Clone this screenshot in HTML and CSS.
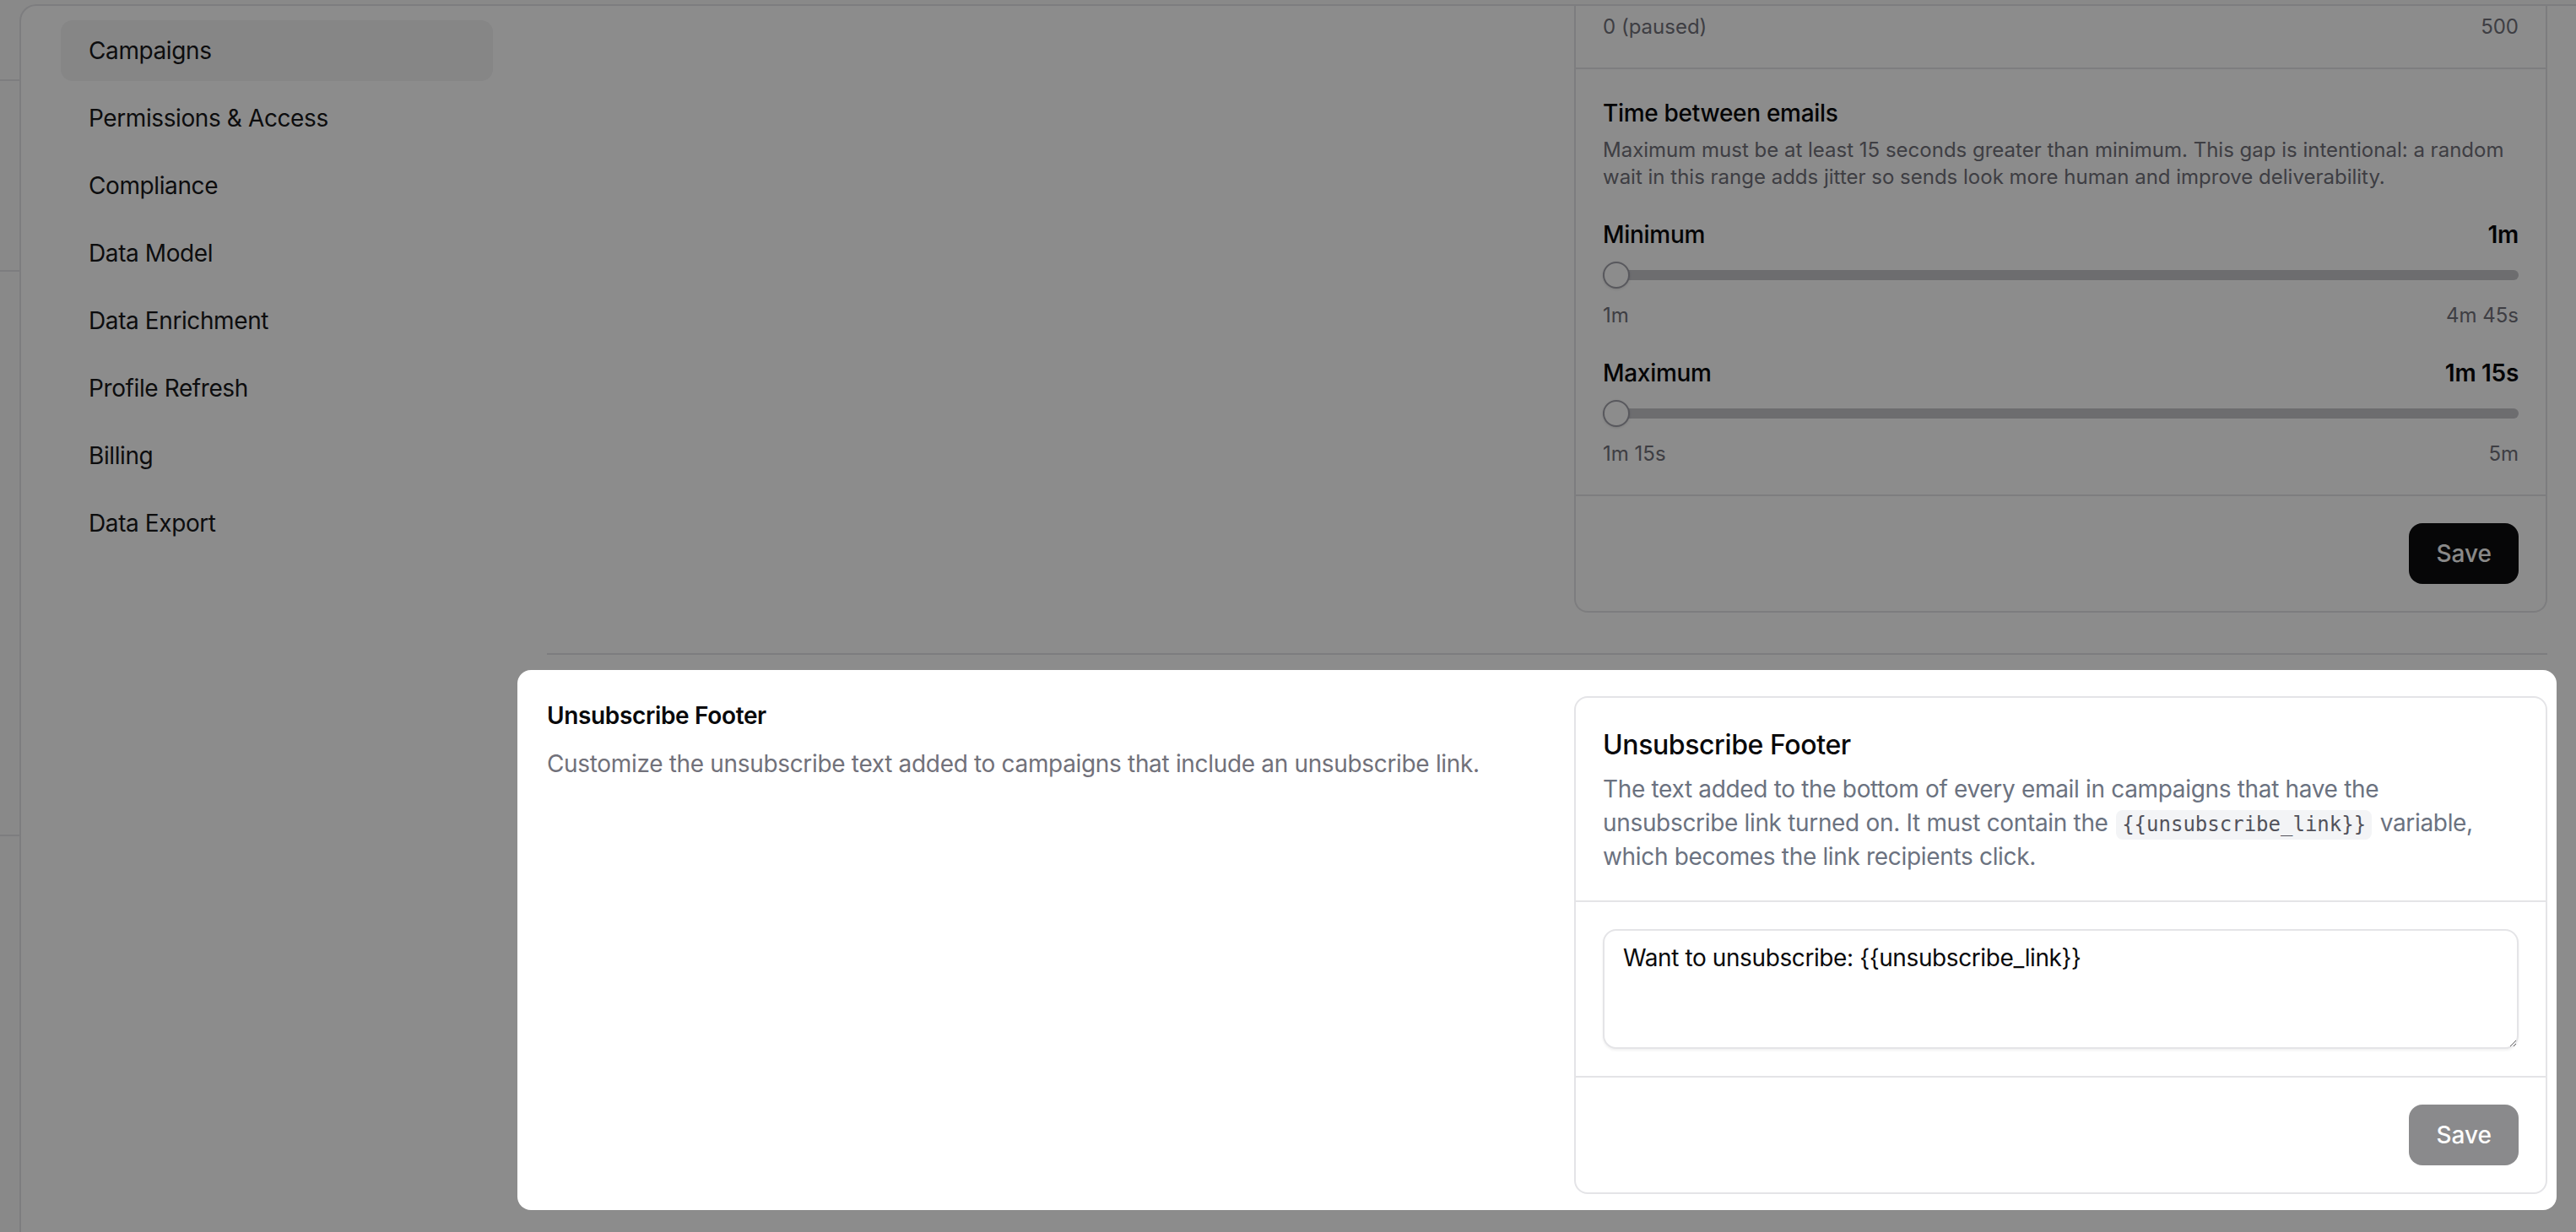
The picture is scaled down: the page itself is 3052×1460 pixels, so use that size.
FILE: index.html
```html
<!DOCTYPE html>
<html lang="en">
<head>
<meta charset="utf-8">
<title>Settings – Campaigns</title>
<link rel="stylesheet" href="styles.css">
</head>
<body>
<div class="app">
  <aside class="rail">
    <div class="rail-seg s1"></div>
    <div class="rail-seg s2"></div>
    <div class="rail-seg s3"></div>
  </aside>
  <main class="panel">
    <nav class="settings-nav">
      <a class="nav-item active">Campaigns</a>
      <a class="nav-item">Permissions &amp; Access</a>
      <a class="nav-item">Compliance</a>
      <a class="nav-item">Data Model</a>
      <a class="nav-item">Data Enrichment</a>
      <a class="nav-item">Profile Refresh</a>
      <a class="nav-item">Billing</a>
      <a class="nav-item">Data Export</a>
    </nav>
    <div class="content">
      <section class="setting-row first">
        <div class="row-info"></div>
        <div class="card card-clipped">
          <div class="card-section top-labels">
            <div class="range-labels"><span>0 (paused)</span><span>500</span></div>
          </div>
          <div class="card-section">
            <div class="field-title">Time between emails</div>
            <p class="field-desc">Maximum must be at least 15 seconds greater than minimum. This gap is intentional: a random wait in this range adds jitter so sends look more human and improve deliverability.</p>
            <div class="slider-group">
              <div class="slider-head"><span>Minimum</span><span class="val">1m</span></div>
              <div class="slider"><div class="track"></div><div class="thumb"></div></div>
              <div class="range-labels small-gap"><span>1m</span><span>4m 45s</span></div>
            </div>
            <div class="slider-group">
              <div class="slider-head"><span>Maximum</span><span class="val">1m 15s</span></div>
              <div class="slider"><div class="track"></div><div class="thumb"></div></div>
              <div class="range-labels small-gap"><span>1m 15s</span><span>5m</span></div>
            </div>
          </div>
          <div class="card-footer"><button class="btn btn-dark">Save</button></div>
        </div>
      </section>

      <section class="setting-row spotlight">
        <div class="row-info">
          <h3 class="row-title">Unsubscribe Footer</h3>
          <p class="row-desc">Customize the unsubscribe text added to campaigns that include an unsubscribe link.</p>
        </div>
        <div class="card">
          <div class="card-header">
            <h4 class="card-title">Unsubscribe Footer</h4>
            <p class="card-desc">The text added to the bottom of every email in campaigns that have the unsubscribe link turned on. It must contain the <code class="chip">{{unsubscribe_link}}</code> variable, which becomes the link recipients click.</p>
          </div>
          <div class="card-body">
            <textarea class="textarea">Want to unsubscribe: {{unsubscribe_link}}</textarea>
          </div>
          <div class="card-footer"><button class="btn btn-disabled" disabled>Save</button></div>
        </div>
      </section>
    </div>
  </main>
</div>
<div class="overlay"></div>
</body>
</html>
```

FILE: styles.css
```css
* { box-sizing: border-box; }

html, body {
  margin: 0;
  height: 100%;
  overflow: hidden;
}

body {
  font-family: Inter, "Noto Sans", sans-serif;
  background: #fafafa;
  color: #09090b;
}

.app {
  display: flex;
  height: 100%;
}

.rail {
  width: 23px;
  flex: none;
  display: flex;
  flex-direction: column;
}

.rail-seg { border-bottom: 2px solid #e4e4e7; }
.s1 { height: 96px; }
.s2 { height: 226px; }
.s3 { height: 669px; }

.panel {
  flex: 1;
  margin-top: 5px;
  border-top: 2px solid #e4e4e7;
  border-left: 2px solid #e4e4e7;
  border-top-left-radius: 20px;
  background: #fff;
  display: flex;
  padding: 0 34px 0 47px;
  overflow: hidden;
}

.settings-nav {
  width: 512px;
  flex: none;
  padding-top: 17px;
  display: flex;
  flex-direction: column;
  gap: 8px;
}

.nav-item {
  display: block;
  height: 72px;
  line-height: 72px;
  padding-left: 33px;
  font-size: 28px;
  letter-spacing: -0.4px;
  color: #18181b;
  border-radius: 14px;
}

.nav-item.active { background: #f4f4f5; }

.content {
  flex: 1;
  margin-left: 64px;
}

.setting-row {
  display: grid;
  grid-template-columns: 1fr 1fr;
  column-gap: 64px;
}

.first {
  padding-bottom: 48px;
  border-bottom: 2px solid #e4e4e7;
}

.card {
  border: 2px solid #e4e4e7;
  border-radius: 16px;
  background: #fff;
}

.card-clipped {
  border-top: none;
  border-radius: 0 0 16px 16px;
}

.card-section { padding: 32px; }
.card-section + .card-section { border-top: 2px solid #e4e4e7; }
.top-labels { padding: 9px 32px 32px; }

.range-labels {
  display: flex;
  justify-content: space-between;
  font-size: 24px;
  line-height: 32px;
  color: #71717a;
}

.small-gap { margin-top: 16px; }

.field-title {
  font-size: 28px;
  line-height: 40px;
  font-weight: 500;
  letter-spacing: -0.3px;
}

.field-desc {
  margin: 8px 0 0;
  font-size: 24px;
  line-height: 32px;
  color: #71717a;
}

.slider-group { margin-top: 32px; }

.slider-head {
  display: flex;
  justify-content: space-between;
  font-size: 28px;
  line-height: 40px;
  font-weight: 500;
  letter-spacing: -0.3px;
}

.slider-head .val { font-weight: 600; }

.slider {
  position: relative;
  height: 32px;
  margin-top: 12px;
}

.track {
  position: absolute;
  left: 0;
  right: 0;
  top: 10px;
  height: 12px;
  border-radius: 6px;
  background: #c6c6cb;
}

.thumb {
  position: absolute;
  left: 0;
  top: 0;
  width: 32px;
  height: 32px;
  border-radius: 50%;
  border: 2px solid #a1a1aa;
  background: #fff;
  box-shadow: 0 1px 3px rgba(0,0,0,0.12);
}

.card-footer {
  border-top: 2px solid #e4e4e7;
  padding: 32px;
  display: flex;
  justify-content: flex-end;
}

.btn {
  height: 72px;
  padding: 0 32px;
  border: none;
  border-radius: 16px;
  font-family: inherit;
  font-size: 28px;
  font-weight: 500;
  color: #fafafa;
}

.btn-dark { background: #0c0c0e; }
.btn-disabled { background: #18181b; opacity: 0.5; }

.spotlight {
  position: relative;
  z-index: 20;
  margin: 18px -11px 0 -35px;
  padding: 31px 11px 19px 35px;
  background: #fff;
  border-radius: 16px;
}

.row-title {
  margin: 3px 0 0;
  font-size: 28px;
  line-height: 40px;
  font-weight: 600;
  letter-spacing: -0.35px;
}

.row-desc {
  margin: 17px 0 0;
  font-size: 28px;
  line-height: 40px;
  letter-spacing: -0.33px;
  color: #71717a;
}

.card-header { padding: 32px; }

.card-title {
  margin: 0;
  font-size: 32px;
  line-height: 48px;
  font-weight: 500;
  letter-spacing: -0.4px;
}

.card-desc {
  margin: 8px 0 0;
  max-width: 1050px;
  font-size: 28px;
  line-height: 40px;
  letter-spacing: -0.33px;
  color: #6b7280;
}

.chip {
  display: inline-block;
  font-family: "DejaVu Sans Mono", "Liberation Mono", monospace;
  font-size: 24px;
  line-height: 31px;
  letter-spacing: 0;
  padding: 2px 7px;
  margin: 0 2px;
  border-radius: 8px;
  background: #f3f4f6;
  color: #52525b;
}

.card-body {
  border-top: 2px solid #e4e4e7;
  padding: 32px;
}

.textarea {
  display: block;
  width: 100%;
  height: 142px;
  padding: 12px 22px;
  border: 2px solid #e4e4e7;
  border-radius: 16px;
  font-family: inherit;
  font-size: 28px;
  line-height: 40px;
  letter-spacing: -0.4px;
  color: #09090b;
  box-shadow: 0 2px 3px rgba(0,0,0,0.06);
  resize: vertical;
  outline: none;
}

.overlay {
  position: fixed;
  inset: 0;
  z-index: 10;
  background: rgba(0,0,0,0.45);
}
```
